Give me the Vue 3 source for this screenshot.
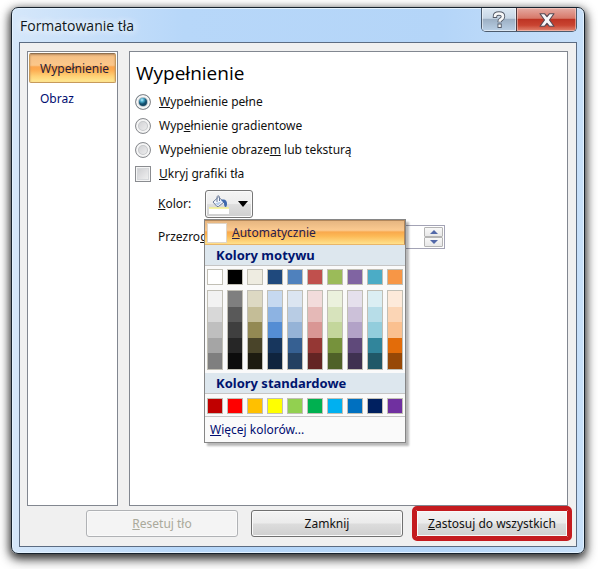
<script setup>
import { ref } from 'vue'

const fill = ref('solid')
const hideGraphics = ref(false)
const transparency = ref('0%')

const fills = [
  { id: 'solid', before: '', key: 'W', after: 'ypełnienie pełne' },
  { id: 'gradient', before: 'Wyp', key: 'e', after: 'łnienie gradientowe' },
  { id: 'picture', before: 'Wypełnienie obraze', key: 'm', after: ' lub teksturą' }
]

const themeColors = [
  { base: '#ffffff', shades: ['#f2f2f2', '#d8d8d8', '#bfbfbf', '#a5a5a5', '#7f7f7f'] },
  { base: '#000000', shades: ['#7f7f7f', '#595959', '#3f3f3f', '#262626', '#0c0c0c'] },
  { base: '#eeece1', shades: ['#ddd9c3', '#c4bd97', '#938953', '#494429', '#1d1b10'] },
  { base: '#1f497d', shades: ['#c6d9f0', '#8db3e2', '#548dd4', '#17365d', '#0f243e'] },
  { base: '#4f81bd', shades: ['#dbe5f1', '#b8cce4', '#95b3d7', '#366092', '#244061'] },
  { base: '#c0504d', shades: ['#f2dcdb', '#e5b9b7', '#d99694', '#953734', '#632423'] },
  { base: '#9bbb59', shades: ['#ebf1dd', '#d7e3bc', '#c3d69b', '#76923c', '#4f6128'] },
  { base: '#8064a2', shades: ['#e5e0ec', '#ccc1d9', '#b2a2c7', '#5f497a', '#3f3151'] },
  { base: '#4bacc6', shades: ['#dbeef3', '#b7dde8', '#92cddc', '#31859b', '#205867'] },
  { base: '#f79646', shades: ['#fdeada', '#fbd5b5', '#fac08f', '#e36c09', '#974806'] }
]
const standardColors = ['#c00000', '#ff0000', '#ffc000', '#ffff00', '#92d050', '#00b050', '#00b0f0', '#0070c0', '#002060', '#7030a0']
</script>

<template>
  <div class="screen">
    <section class="window" role="dialog" aria-labelledby="title">
      <header class="titlebar">
        <span id="title" class="title">Formatowanie tła</span>
        <div class="caption-buttons">
          <button class="help" type="button" aria-label="Pomoc">
            <svg width="16" height="20" viewBox="0 0 16 20">
              <path d="M4 8V6.200C4 4.300 5.500 3.500 8 3.500S12 4.500 12 6.400C12 8.200 10.800 8.900 9.700 9.700 8.800 10.300 8.600 10.800 8.600 12.300M6.500 15.800h4.200" fill="none" stroke="#555c69" stroke-width="4.400" />
              <path d="M4 7V6.200C4 4.300 5.500 3.500 8 3.500S12 4.500 12 6.400C12 8.200 10.800 8.900 9.700 9.700 8.800 10.300 8.600 10.800 8.600 11.700M7.400 15.800h2.400" fill="none" stroke="#f8f8f8" stroke-width="2.600" />
            </svg>
          </button>
          <button class="close" type="button" aria-label="Zamknij okno">
            <svg width="16" height="14" viewBox="0 0 16 14">
              <path d="M1 .8h4.700L8 3.700 10.300.8H15L10.500 7l4.500 6.200h-4.700L8 10.300l-2.300 2.900H1L5.500 7z" fill="#f7f7f9" stroke="#534752" stroke-width="1.100" stroke-linejoin="round" />
            </svg>
          </button>
        </div>
      </header>

      <div class="client">
        <div class="body">
          <nav class="sidebar">
            <a href="#fill" class="tab active" aria-current="page">Wypełnienie</a>
            <a href="#picture" class="tab">Obraz</a>
          </nav>

          <main class="panel">
            <h1>Wypełnienie</h1>
            <label v-for="f in fills" :key="f.id" class="option">
              <input v-model="fill" type="radio" name="fill" :value="f.id" />
              <span>{{ f.before }}<u>{{ f.key }}</u>{{ f.after }}</span>
            </label>
            <label class="option">
              <input v-model="hideGraphics" type="checkbox" />
              <span><u>U</u>kryj grafiki tła</span>
            </label>

            <div class="field">
              <label class="name" for="color"><u>K</u>olor:</label>
              <div class="picker">
                <button id="color" class="color-button" type="button" aria-label="Kolor" aria-expanded="true">
                  <svg width="20" height="20" viewBox="0 0 20 20">
                    <path d="M0 14h20v6H0z" fill="#fff" />
                    <path d="M0 14h20" stroke="#f4f08a" stroke-width="1.500" />
                    <path d="M4 8L9.500 3l5.500 5-5.500 4.500H8z" fill="#f5f9ff" stroke="#6b7a98" />
                    <path d="M6 9.300l7-2-4 4.500z" fill="#b8cdec" />
                    <path d="M8 8V3.500C8 1.200 10.500 1.200 10.500 3.500V7" fill="none" stroke="#6b7c9c" />
                    <path d="M12 6c4-1.500 6 .5 6 3.500 0 2-.500 3.500-1.500 3.500S15 11 15 9z" fill="#3f69ad" />
                  </svg>
                  <svg width="10" height="6" viewBox="0 0 10 6"><path d="M0 0h10L5 6z" fill="#000" /></svg>
                </button>

                <div class="menu">
                  <button class="automatic" type="button">
                    <span class="blank"></span>
                    <span><u>A</u>utomatycznie</span>
                  </button>
                  <h2>Kolory motywu</h2>
                  <div class="swatches">
                    <button v-for="c in themeColors" :key="c.base" class="swatch" type="button" :aria-label="c.base" :style="{ background: c.base }"></button>
                  </div>
                  <div class="swatches shades">
                    <div v-for="c in themeColors" :key="c.base" class="strip">
                      <button v-for="s in c.shades" :key="s" type="button" :aria-label="s" :style="{ background: s }"></button>
                    </div>
                  </div>
                  <h2>Kolory standardowe</h2>
                  <div class="swatches standard">
                    <button v-for="c in standardColors" :key="c" class="swatch" type="button" :aria-label="c" :style="{ background: c }"></button>
                  </div>
                  <button class="more" type="button"><u>W</u>ięcej kolorów...</button>
                </div>
              </div>
            </div>

            <div class="field transparency">
              <label class="name" for="transparency">Przezro<u>c</u>zystość:</label>
              <div class="spinner">
                <input id="transparency" v-model="transparency" type="text" />
                <div class="steps">
                  <button type="button" aria-label="Zwiększ"><svg width="8" height="4" viewBox="0 0 8 4"><path d="M0 4h8L4 0z" /></svg></button>
                  <button type="button" aria-label="Zmniejsz"><svg width="8" height="4" viewBox="0 0 8 4"><path d="M0 0h8L4 4z" /></svg></button>
                </div>
              </div>
            </div>
          </main>
        </div>

        <footer class="actions">
          <button class="action" type="button" disabled><u>R</u>esetuj tło</button>
          <button class="action" type="button">Zamknij</button>
          <button class="action marked" type="button"><u>Z</u>astosuj do wszystkich</button>
        </footer>
      </div>
    </section>
  </div>
</template>

<style>
body {
  margin: 0;
  background: #fff;
}
</style>

<style scoped>
* {
  box-sizing: border-box;
}
.screen {
  display: flex;
  min-height: 100vh;
  padding: 7px 13px 15px 11px;
  overflow: hidden;
  font: 12px/16px "Noto Sans", sans-serif;
  color: #111;
}
button {
  padding: 0;
  font: inherit;
  color: inherit;
}
.window {
  flex: 1;
  display: flex;
  flex-direction: column;
  min-width: 0;
  padding: 0 7px 6px;
  border: 1px solid #17222d;
  border-radius: 7px;
  background: linear-gradient(90deg, #d5e7fa 0, #b7d7f9 30%, #b4d5f8 75%, #c8e0f9 100%);
  box-shadow: inset 0 0 0 1px #e3f2ff, 0 3px 9px 1px rgba(0, 0, 0, 0.7), 0 5px 14px rgba(0, 0, 0, 0.4);
}
.titlebar {
  display: flex;
  justify-content: space-between;
  height: 34px;
}
.title {
  padding: 8px 12px 0 1px;
  font: 14px/20px "Open Sans", sans-serif;
  color: #101820;
  text-shadow: 0 0 8px #fff, 0 0 8px #fff;
}
.caption-buttons {
  display: flex;
  height: 24px;
  border: 1px solid #4c5b6d;
  border-top: 0;
  border-radius: 0 0 5px 5px;
  overflow: hidden;
}
.caption-buttons button {
  display: flex;
  align-items: center;
  justify-content: center;
  border: 0;
}
.help {
  width: 34px;
  background: linear-gradient(#dce8f3 0, #c7d6e5 45%, #9cafc3 48%, #bad0e6 100%);
  box-shadow: inset 0 0 0 1px rgba(255, 255, 255, 0.5);
}
.caption-buttons .close {
  width: 60px;
  border-left: 1px solid #4d3940;
  background: linear-gradient(#e5aaa2 0, #d77869 45%, #bd3323 48%, #c94431 75%, #e18570 100%);
  box-shadow: inset 0 0 0 1px rgba(255, 220, 210, 0.5);
}
.client {
  flex: 1;
  display: flex;
  flex-direction: column;
  padding: 8px 8px 9px 7px;
  border: 1px solid #5c6c82;
  background: #f0f0f0;
}
.body {
  flex: 1;
  display: flex;
  gap: 11px;
}
.sidebar,
.panel {
  border: 1px solid #828790;
  background: #fff;
}
.sidebar {
  flex: 0 0 91px;
  padding: 1px;
}
.tab {
  display: block;
  height: 30px;
  padding: 7px 0 7px 10px;
  border: 1px solid transparent;
  border-radius: 2px;
  color: #000d70;
  text-decoration: none;
}
.tab.active {
  border-color: #c79a5b;
  border-top-color: #8e7050;
  color: #251c3a;
  background: linear-gradient(#f4bf84 0, #fbc78b 40%, #fba64f 46%, #fda94e 55%, #ffd277 80%, #ffe993 100%);
  box-shadow: inset 0 1px 2px #b88b60;
}
.panel {
  flex: 1;
  min-width: 0;
  padding: 7px 5px;
}
h1 {
  margin: 0 0 3px;
  padding-left: 1px;
  font: 19px/28px "Open Sans", sans-serif;
  color: #000;
}
.option {
  display: flex;
  align-items: center;
  gap: 8px;
  height: 24px;
}
.option input {
  appearance: none;
  width: 16px;
  height: 16px;
  margin: 0;
  border: 1px solid #8a8c90;
  background: linear-gradient(135deg, #c9cacd, #f5f5f5);
  box-shadow: inset 0 0 0 1px #f5f5f5, inset 0 0 0 2px #d6d8db;
}
.option input[type="radio"] {
  border-radius: 50%;
  box-shadow: inset 0 0 0 2px #f5f5f5, inset 0 0 0 3px #c6c8cb;
}
.option input[type="radio"]:checked {
  background: radial-gradient(circle at 6px 5px, #b9efff 0, #45a6c6 2px, #12506f 4px, #143e58 7px, #143e58 8px);
  box-shadow: inset 0 0 0 2px #f5f5f5, inset 0 0 0 3px #b4c0c8;
}
.field {
  display: flex;
  align-items: center;
  height: 28px;
  margin-top: 4px;
  padding-left: 23px;
}
.name {
  flex: 0 0 47px;
  white-space: nowrap;
}
.transparency {
  margin-top: 5px;
}
.transparency .name {
  flex-basis: 92px;
}
.picker {
  position: relative;
}
.color-button {
  display: flex;
  align-items: center;
  gap: 9px;
  width: 48px;
  height: 28px;
  padding: 0 4px 0 3px;
  border: 1px solid #777;
  border-radius: 3px;
  background: linear-gradient(#f4f4f4 0, #ededed 48%, #dedede 52%, #cfcfcf);
  box-shadow: inset 0 0 0 1px #fafafa;
}
.color-button svg {
  flex: none;
}
.spinner {
  display: flex;
  width: 195px;
  height: 24px;
  padding: 1px;
  border: 1px solid #a3a3b5;
  background: #fff;
}
.spinner input {
  flex: 1;
  min-width: 0;
  padding: 0 4px;
  border: 0;
  font: inherit;
}
.steps {
  display: flex;
  flex-direction: column;
  width: 19px;
}
.steps button {
  flex: 1;
  display: flex;
  align-items: center;
  justify-content: center;
  border: 1px solid #b4b4b4;
  border-radius: 1px;
  background: linear-gradient(#f8f8f8, #e8e8e8);
}
.steps path {
  fill: #5268a8;
}
.menu {
  position: absolute;
  z-index: 1;
  top: 29px;
  left: -1px;
  width: 202px;
  border: 1px solid #868686;
  background: #fafafa;
  box-shadow: 3px 3px 2px rgba(0, 0, 0, 0.28);
  color: #000d70;
}
.automatic {
  display: flex;
  align-items: center;
  gap: 5px;
  width: 100%;
  height: 25px;
  padding: 1px 2px;
  border: 1px solid #b2875a;
  border-width: 1px 1px 1px 0;
  border-bottom-color: #e8b66a;
  background: linear-gradient(#e6b681 0, #fbca90 40%, #f9a94d 48%, #fcb956 65%, #ffe18c 100%);
  color: #29204b;
}
.blank {
  width: 20px;
  height: 20px;
  border: 1px solid #dfd5c8;
  background: #fff;
}
h2 {
  height: 21px;
  margin: 0;
  padding-left: 11px;
  border-bottom: 1px solid #c5c5c5;
  background: #dde7ee;
  font: bold 13px/20px "Noto Sans", sans-serif;
  color: #00156e;
}
.swatches {
  display: flex;
  justify-content: space-between;
  padding: 3px 2px;
}
.swatch {
  width: 16px;
  height: 16px;
  border: 1px solid #c1bfb5;
}
.shades {
  padding-top: 2px;
}
.strip {
  display: flex;
  flex-direction: column;
  width: 16px;
  height: 80px;
  border: 1px solid #c1bfb5;
}
.strip button {
  flex: 1;
  border: 0;
}
.standard {
  padding: 4px 2px 2px;
  border-bottom: 1px solid #c5c5c5;
}
.more {
  display: block;
  width: 100%;
  height: 25px;
  padding: 0 5px;
  border: 0;
  background: none;
  text-align: left;
}
.actions {
  display: flex;
  justify-content: flex-end;
  gap: 13px;
  padding-top: 4px;
}
.action {
  width: 152px;
  height: 27px;
  border: 1px solid #707070;
  border-radius: 3px;
  background: linear-gradient(#f3f3f3 0, #ebebeb 48%, #dcdcdc 52%, #cfcfcf 100%);
  box-shadow: inset 0 0 0 1px #fafafa;
}
.action:disabled {
  border-color: #b0b2b5;
  background: #f4f4f4;
  color: #aaa99b;
}
.action.marked {
  border-color: #c41b1f;
  border-radius: 1px;
  outline: 4px solid #c41b1f;
}
</style>
